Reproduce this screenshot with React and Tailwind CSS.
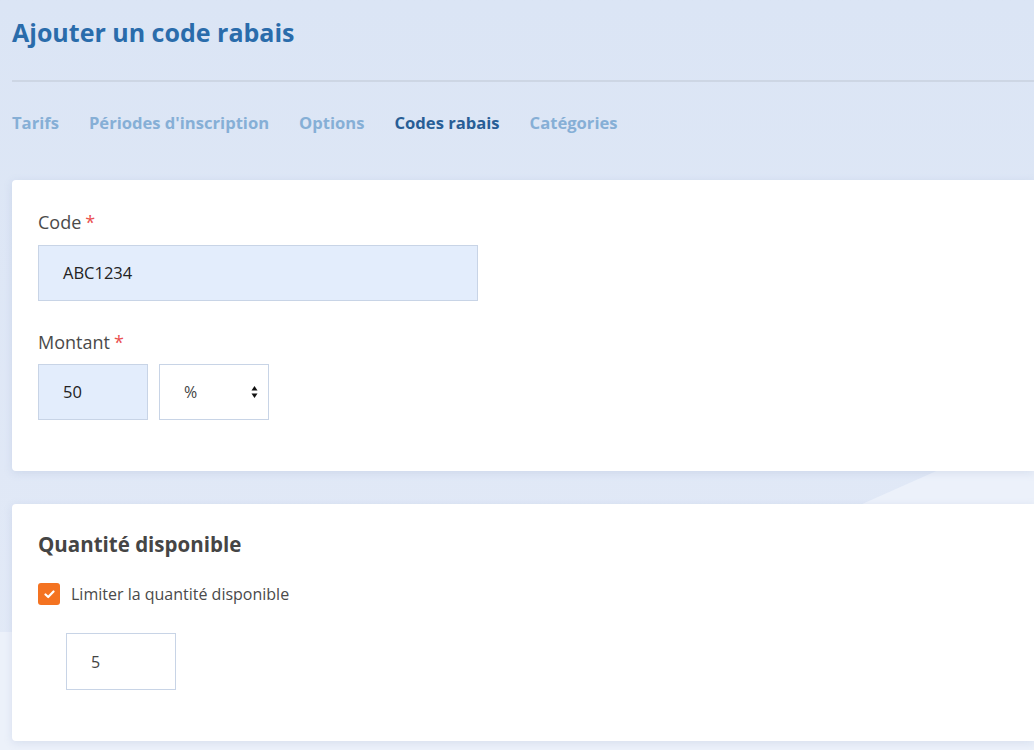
export default function App() {
  const tabs = [
    { label: "Tarifs", active: false },
    { label: "Périodes d'inscription", active: false },
    { label: "Options", active: false },
    { label: "Codes rabais", active: true },
    { label: "Catégories", active: false },
  ];

  return (
    <div
      className="relative min-h-[750px] w-full overflow-hidden bg-gradient-to-b from-[#dbe5f5] to-[#e3eaf7] text-[#4a4a4a]"
      style={{ fontFamily: '"Open Sans", "Noto Sans", sans-serif' }}
    >
      {/* décor de fond */}
      <div className="pointer-events-none absolute inset-0 bg-[#ecf1fa] [clip-path:polygon(0_632px,574px_632px,1040px_425px,1040px_750px,0_750px)]" />

      <div className="relative pl-3">
        <h1 className="pt-[14px] text-[25px] font-bold leading-9 text-[#2a6cab]">Ajouter un code rabais</h1>
        <div className="mt-[30px] h-[2px] bg-[#cdd6e4]" />

        {/* onglets */}
        <nav className="mt-[29px] flex gap-[30px] text-[16.6px] font-bold leading-6">
          {tabs.map((t) => (
            <span key={t.label} className={t.active ? "text-[#285e96]" : "text-[#86afd6]"}>
              {t.label}
            </span>
          ))}
        </nav>

        {/* carte code */}
        <section className="mt-[45px] h-[291px] rounded-l bg-white px-[26px] pt-[32px] shadow-[0_2px_8px_rgba(120,145,190,0.18)]">
          <label className="block text-[18px] font-medium leading-5">
            Code<span className="ml-1 text-[#ea4f4f]">*</span>
          </label>
          <div className="mt-[13px] flex h-[56px] w-[440px] items-center border border-[#c8d4e6] bg-[#e3edfc] px-6 text-[16.5px] text-[#222]">
            ABC1234
          </div>

          <label className="mt-[31px] block text-[18px] font-medium leading-5">
            Montant<span className="ml-1 text-[#ea4f4f]">*</span>
          </label>
          <div className="mt-[12px] flex gap-[11px]">
            <div className="flex h-[56px] w-[110px] items-center border border-[#c8d4e6] bg-[#e3edfc] px-6 text-[16.5px] text-[#222]">
              50
            </div>
            <div className="flex h-[56px] w-[110px] items-center justify-between border border-[#c8d4e6] bg-white pl-6 pr-[10px] text-[16px] text-[#444]">
              <span>%</span>
              <svg width="7" height="14" viewBox="0 0 7 14" className="text-[#111]">
                <path d="M3.5 1 L6.5 5.5 H0.5 Z" fill="currentColor" />
                <path d="M3.5 13 L6.5 8.5 H0.5 Z" fill="currentColor" />
              </svg>
            </div>
          </div>
        </section>

        {/* carte quantité */}
        <section className="mt-[33px] h-[237px] rounded-l bg-white px-[26px] pt-[28px] shadow-[0_2px_8px_rgba(120,145,190,0.18)]">
          <h2 className="text-[20.5px] font-bold leading-6 text-[#454545]">Quantité disponible</h2>
          <label className="mt-[26px] flex items-center gap-[11px] text-[16px] leading-6">
            <span className="flex h-[22px] w-[22px] items-center justify-center rounded-[3px] bg-[#f47321]">
              <svg width="11" height="9" viewBox="0 0 11 9">
                <path d="M1.5 4.5 L4.2 7 L9.5 1.5" fill="none" stroke="white" strokeWidth="2.2" strokeLinecap="round" strokeLinejoin="round" />
              </svg>
            </span>
            Limiter la quantité disponible
          </label>
          <div className="ml-[28px] mt-[27px] flex h-[57px] w-[110px] items-center border border-[#c8d4e6] bg-white px-6 text-[16px] text-[#444]">
            5
          </div>
        </section>
      </div>
    </div>
  );
}
